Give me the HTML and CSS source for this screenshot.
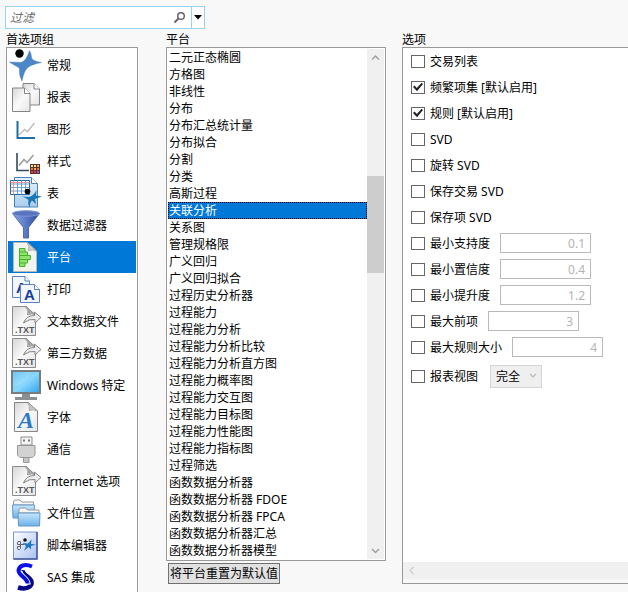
FILE: index.html
```html
<!DOCTYPE html>
<html lang="zh-CN">
<head>
    <meta charset="UTF-8">
    <meta name="viewport" content="width=device-width, initial-scale=1.0">
    <title>首选项</title>
    <link rel="stylesheet" href="styles.css">
</head>
<body>
    <!-- Shared gradients and symbols -->
    <svg class="defs" width="0" height="0" aria-hidden="true">
        <defs>
            <linearGradient id="paper" x1="0" y1="0" x2="1" y2="1">
                <stop offset="0" stop-color="#d6d6d6"/>
                <stop offset="0.5" stop-color="#fafafa"/>
                <stop offset="1" stop-color="#e4e4e4"/>
            </linearGradient>
            <linearGradient id="bluePaper" x1="0" y1="0" x2="0" y2="1">
                <stop offset="0" stop-color="#e6f1fb"/>
                <stop offset="1" stop-color="#a9cdee"/>
            </linearGradient>
            <linearGradient id="funnel" x1="0" y1="0" x2="1" y2="0">
                <stop offset="0" stop-color="#8aa4e0"/>
                <stop offset="0.4" stop-color="#6384cf"/>
                <stop offset="1" stop-color="#2c489c"/>
            </linearGradient>
            <linearGradient id="screen" x1="0" y1="0" x2="1" y2="1">
                <stop offset="0" stop-color="#4fb8f5"/>
                <stop offset="0.5" stop-color="#8ad8fc"/>
                <stop offset="1" stop-color="#35a7ee"/>
            </linearGradient>
            <linearGradient id="folder" x1="0" y1="0" x2="0" y2="1">
                <stop offset="0" stop-color="#c9e6fb"/>
                <stop offset="1" stop-color="#6db1e8"/>
            </linearGradient>
            <linearGradient id="script" x1="0" y1="0" x2="1" y2="1">
                <stop offset="0" stop-color="#ffffff"/>
                <stop offset="1" stop-color="#a8c0f0"/>
            </linearGradient>
            <symbol id="txt-file" viewBox="0 0 34 32">
                <path d="M4.5 1.5H18L27.5 10V30.5H4.5Z" fill="url(#paper)" stroke="#8c8c8c"/>
                <path d="M17 1.5Q21 5 19.5 10Q24 8 27.5 10L18 1.5Z" fill="#a8a8a8" stroke="#8c8c8c" stroke-width=".6"/>
                <path d="M15.5 18Q18 10.5 26.5 10.5V7L33 12.5L27 18V14.5Q21 13.5 15.5 18Z" fill="#ececec" stroke="#777" stroke-width=".9"/>
                <text x="7" y="28" class="txt-mark">.TXT</text>
            </symbol>
        </defs>
    </svg>

    <div class="search">
        <input type="text" class="search-input" placeholder="过滤" aria-label="过滤">
        <svg class="search-icon" width="14" height="14" viewBox="0 0 14 14" aria-hidden="true">
            <circle cx="8" cy="5" r="3.3" fill="none" stroke="#666" stroke-width="1.5"/>
            <path d="M5.5 7.5L1.5 11.5" stroke="#666" stroke-width="2"/>
        </svg>
        <button type="button" class="search-menu" aria-label="过滤选项">
            <svg width="8" height="5" viewBox="0 0 8 5"><path d="M0 0H8L4 4.5Z" fill="#000"/></svg>
        </button>
    </div>

    <main class="columns">
        <!-- Preference groups -->
        <section class="column groups">
            <h2>首选项组</h2>
            <ul class="group-list">
                <li><button type="button" class="group">
                    <svg class="icon" viewBox="0 0 32 32">
                        <path d="M1.500 13L13 13.500Q18.500 12 21.500 1.500Q23.500 5 23.500 8.500Q24 12 33.500 13.500Q25 15 20.500 18Q16 21 14 32Q11 26 11.500 22Q12.500 18.500 8 17Q5 15.500 1.500 13Z" fill="#4a87ca" stroke="#3a6ca8" stroke-width=".4"/>
                        <circle cx="11.5" cy="4.5" r="4.2" fill="#000"/>
                    </svg>常规</button></li>
                <li><button type="button" class="group">
                    <svg class="icon" viewBox="0 0 32 32">
                        <path d="M15 2.5H26L31.5 8V24H15Z" fill="url(#paper)" stroke="#858585"/>
                        <path d="M26 2.5V8H31.5" fill="#fff" stroke="#858585"/>
                        <path d="M4.5 7H16.5L22 12.5V30.5H4.5Z" fill="url(#paper)" stroke="#858585"/>
                        <path d="M16.5 7V12.5H22" fill="#fff" stroke="#858585"/>
                    </svg>报表</button></li>
                <li><button type="button" class="group">
                    <svg class="icon" viewBox="0 0 32 32">
                        <path d="M11 22L16.5 16.5L19.5 18.5L26.5 10" fill="none" stroke="#bdbdbd" stroke-width="1.4"/>
                        <path d="M9.500 8V25H27" fill="none" stroke="#1b6fa8" stroke-width="2"/>
                    </svg>图形</button></li>
                <li><button type="button" class="group">
                    <svg class="icon" viewBox="0 0 32 32">
                        <path d="M11 20.5L16 14.5L19 17.5L25.5 10" fill="none" stroke="#a0a0a0" stroke-width="1.6"/>
                        <path d="M9 8V25.5H21" fill="none" stroke="#34495a" stroke-width="1.6"/>
                        <path d="M22 19H32V29H22Z" fill="#5d302c"/>
                        <path d="M23 20h2v2h-2zM26 20h2v2h-2z" fill="#f6e6a0"/>
                        <path d="M29 20h2v2h-2zM26 23h2v2h-2z" fill="#f0b050"/>
                        <path d="M23 23h2v2h-2zM29 23h2v2h-2z" fill="#e87848"/>
                        <path d="M23 26h2v2h-2zM26 26h2v2h-2z" fill="#cf3f48"/>
                        <path d="M29 26h2v2h-2z" fill="#6d6fd0"/>
                    </svg>样式</button></li>
                <li><button type="button" class="group">
                    <svg class="icon" viewBox="0 0 32 32">
                        <path d="M6.5 .5H23.5L29.5 6.5V30H6.5Z" fill="url(#bluePaper)" stroke="#4b83b8"/>
                        <path d="M23.5 .5V6.5H29.5" fill="#fff" stroke="#4b83b8"/>
                        <path d="M2.5 3.5H21.5V17.5H2.5Z" fill="#fff" stroke="#2864a8"/>
                        <path d="M2.5 7H21.5M2.5 10.5H21.5M2.5 14H21.5M9.5 3.5V17.5M13.5 3.5V17.5M17.5 3.5V17.5" stroke="#4d8bc8" stroke-width=".8"/>
                        <path d="M5.5 3.5V17.5M2.5 5.5H21.5" stroke="#e88080" stroke-width=".8"/>
                        <path d="M14 19.500L21 20Q26 18.500 28.500 13L28 18.500L34 19.500L27 22L28 27L24 23.500Q22 25 21.500 31Q19.500 27 20.500 23Q18 20.500 14 19.500Z" fill="#1878b4"/>
                        <circle cx="19.5" cy="14.5" r="2.8" fill="#000"/>
                    </svg>表</button></li>
                <li><button type="button" class="group">
                    <svg class="icon" viewBox="0 0 32 32">
                        <path d="M4.5 4.5L15.5 18.5V29H20.5V18.5L31.5 4.5Z" fill="url(#funnel)" stroke="#3a54a0" stroke-width=".8"/>
                        <ellipse cx="18" cy="4.5" rx="13.5" ry="2.8" fill="#5874bc" stroke="#7c94d4"/>
                    </svg>数据过滤器</button></li>
                <li><button type="button" class="group selected" aria-current="true">
                    <svg class="icon" viewBox="0 0 32 32">
                        <path d="M5.5 1.5H19.5L28.5 10V30.5H5.5Z" fill="#f4f4ee" stroke="#b8b8b0"/>
                        <path d="M19 1.5Q22 5 20.5 9.5Q25 8 28.5 10L19.5 1.5Z" fill="#d0d0cc" stroke="#888" stroke-width=".6"/>
                        <path d="M11.5 7.5H17V11H19.5V14.5H22.5V18.5H19.5V22H17V25.5H11.5Z" fill="#8ce66c" stroke="#45b02c"/>
                        <path d="M11.5 11H17M11.5 14.5H19.5M11.5 18.5H19.5M11.5 22H17" stroke="#45b02c"/>
                    </svg>平台</button></li>
                <li><button type="button" class="group">
                    <svg class="icon" viewBox="0 0 32 32">
                        <path d="M4.5 3.5H17L21.5 8V24.5H4.5Z" fill="#f2f6fd" stroke="#5b80c8"/>
                        <path d="M17 3.5V8H21.5" fill="#fff" stroke="#5b80c8"/>
                        <text x="8" y="20" class="letter">A</text>
                        <path d="M12.5 11.5H26.5L31.5 16.5V29.5H12.5Z" fill="#f2f6fd" stroke="#5b80c8"/>
                        <path d="M26.5 11.5V16.5H31.5" fill="#fff" stroke="#5b80c8"/>
                        <text x="16" y="27" class="letter">A</text>
                    </svg>打印</button></li>
                <li><button type="button" class="group">
                    <svg class="icon" viewBox="0 0 32 32"><use href="#txt-file" width="34" height="32"/></svg>文本数据文件</button></li>
                <li><button type="button" class="group">
                    <svg class="icon" viewBox="0 0 32 32"><use href="#txt-file" width="34" height="32"/></svg>第三方数据</button></li>
                <li><button type="button" class="group">
                    <svg class="icon" viewBox="0 0 32 32">
                        <path d="M14 25H22V28H29V31H7V28H14Z" fill="#8b9093"/>
                        <rect x="3" y="1" width="30" height="24" fill="#777c80"/>
                        <rect x="5" y="3" width="26" height="20" fill="url(#screen)"/>
                        <path d="M5 3H24Q19 15 5 18Z" fill="#fff" opacity=".18"/>
                    </svg>Windows 特定</button></li>
                <li><button type="button" class="group">
                    <svg class="icon" viewBox="0 0 32 32">
                        <path d="M6.5 1.5H20L29.5 10V30.5H6.5Z" fill="url(#paper)" stroke="#858585"/>
                        <path d="M19.5 1.5Q22.5 5 21 9.5Q25.5 8 29.5 10L20 1.5Z" fill="#c8c8c8" stroke="#858585" stroke-width=".6"/>
                        <text x="10" y="27" class="font-letter">A</text>
                    </svg>字体</button></li>
                <li><button type="button" class="group">
                    <svg class="icon" viewBox="0 0 32 32">
                        <path d="M13 4H24V12H13Z" fill="#f4f4f4" stroke="#8a8a8a"/>
                        <path d="M15 6.5h2v2h-2zM20 6.5h2v2h-2z" fill="#777"/>
                        <path d="M15.5 23H21V29.5H15.5Z" fill="#c4c4c4" stroke="#999"/>
                        <path d="M9.5 12.5H27V22L24.5 24.5H12L9.5 22Z" fill="#d2d2d2" stroke="#989898"/>
                    </svg>通信</button></li>
                <li><button type="button" class="group">
                    <svg class="icon" viewBox="0 0 32 32"><use href="#txt-file" width="34" height="32"/></svg>Internet 选项</button></li>
                <li><button type="button" class="group">
                    <svg class="icon" viewBox="0 0 32 32">
                        <path d="M5.5 8V4L7 3H12L14 5H25.5V8Z" fill="#f6f6f6" stroke="#999"/>
                        <path d="M4.5 8H26.5L26 21H5Z" fill="url(#folder)" stroke="#6098c8"/>
                        <path d="M11 16V12L12.5 11H17.5L19.5 13H31V16Z" fill="#f6f6f6" stroke="#999"/>
                        <path d="M10 16H32L31.5 29H10.5Z" fill="url(#folder)" stroke="#6098c8"/>
                    </svg>文件位置</button></li>
                <li><button type="button" class="group">
                    <svg class="icon" viewBox="0 0 32 32">
                        <path d="M5.5 3H29V30H5.5Z" fill="url(#script)" stroke="#7894d0"/>
                        <path d="M29 3V30H5.5" fill="none" stroke="#46589c" stroke-width="1.5"/>
                        <path d="M10 12.5H12.500V19.500Q12 21 10 20.500Q9 19 9.500 17.500H12.500M10 12.500Q9 14 9.500 15.500H16" fill="none" stroke="#666"/>
                        <path d="M14.500 14L20 14.500L23.500 10.500L23 15L28 15.500L23 17L23 20.500L20.500 18L16 22L18 17Z" fill="#1878c4"/>
                        <circle cx="17" cy="11" r="1.8" fill="#111"/>
                    </svg>脚本编辑器</button></li>
                <li><button type="button" class="group">
                    <svg class="icon" viewBox="0 0 32 32" fill="none">
                        <path d="M10 26.500C18 29 24.500 26 23.500 20.500C22.500 16 14 14 14.500 9" stroke="#070a88" stroke-width="4.500"/>
                        <path d="M21 23.500C22 17 12.500 15 13 9.500" stroke="#fff" stroke-width="3"/>
                        <path d="M24 5.500C17 2.500 11 4.500 10.500 9.500C10.500 15 19.500 16.500 19.500 22.500" stroke="#0a10e8" stroke-width="4"/>
                    </svg>SAS 集成</button></li>
            </ul>
        </section>

        <!-- Platforms -->
        <section class="column platforms">
            <h2>平台</h2>
            <div class="platform-box">
                <ul class="platform-list">
                    <li><button type="button" class="platform">二元正态椭圆</button></li>
                    <li><button type="button" class="platform">方格图</button></li>
                    <li><button type="button" class="platform">非线性</button></li>
                    <li><button type="button" class="platform">分布</button></li>
                    <li><button type="button" class="platform">分布汇总统计量</button></li>
                    <li><button type="button" class="platform">分布拟合</button></li>
                    <li><button type="button" class="platform">分割</button></li>
                    <li><button type="button" class="platform">分类</button></li>
                    <li><button type="button" class="platform">高斯过程</button></li>
                    <li><button type="button" class="platform selected" aria-current="true">关联分析</button></li>
                    <li><button type="button" class="platform">关系图</button></li>
                    <li><button type="button" class="platform">管理规格限</button></li>
                    <li><button type="button" class="platform">广义回归</button></li>
                    <li><button type="button" class="platform">广义回归拟合</button></li>
                    <li><button type="button" class="platform">过程历史分析器</button></li>
                    <li><button type="button" class="platform">过程能力</button></li>
                    <li><button type="button" class="platform">过程能力分析</button></li>
                    <li><button type="button" class="platform">过程能力分析比较</button></li>
                    <li><button type="button" class="platform">过程能力分析直方图</button></li>
                    <li><button type="button" class="platform">过程能力概率图</button></li>
                    <li><button type="button" class="platform">过程能力交互图</button></li>
                    <li><button type="button" class="platform">过程能力目标图</button></li>
                    <li><button type="button" class="platform">过程能力性能图</button></li>
                    <li><button type="button" class="platform">过程能力指标图</button></li>
                    <li><button type="button" class="platform">过程筛选</button></li>
                    <li><button type="button" class="platform">函数数据分析器</button></li>
                    <li><button type="button" class="platform">函数数据分析器 FDOE</button></li>
                    <li><button type="button" class="platform">函数数据分析器 FPCA</button></li>
                    <li><button type="button" class="platform">函数数据分析器汇总</button></li>
                    <li><button type="button" class="platform">函数数据分析器模型</button></li>
                </ul>
                <div class="scrollbar" aria-hidden="true">
                    <svg class="scroll-arrow" viewBox="0 0 17 17"><path d="M5 10.5L8.5 7L12 10.5"/></svg>
                    <div class="scroll-track"><div class="scroll-thumb"></div></div>
                    <svg class="scroll-arrow" viewBox="0 0 17 17"><path d="M5 7L8.5 10.5L12 7"/></svg>
                </div>
            </div>
            <button type="button" class="reset">将平台重置为默认值</button>
        </section>

        <!-- Options of the selected platform -->
        <section class="column options">
            <h2>选项</h2>
            <div class="option-box">
                <form class="option-list">
                    <div class="option"><input type="checkbox" id="opt-list"><label for="opt-list">交易列表</label></div>
                    <div class="option"><input type="checkbox" id="opt-itemsets" checked><label for="opt-itemsets">频繁项集 [默认启用]</label></div>
                    <div class="option"><input type="checkbox" id="opt-rules" checked><label for="opt-rules">规则 [默认启用]</label></div>
                    <div class="option"><input type="checkbox" id="opt-svd"><label for="opt-svd">SVD</label></div>
                    <div class="option"><input type="checkbox" id="opt-rotated"><label for="opt-rotated">旋转 SVD</label></div>
                    <div class="option"><input type="checkbox" id="opt-save-trans"><label for="opt-save-trans">保存交易 SVD</label></div>
                    <div class="option"><input type="checkbox" id="opt-save-item"><label for="opt-save-item">保存项 SVD</label></div>
                    <div class="option"><input type="checkbox" id="opt-support"><label for="opt-support">最小支持度</label>
                        <input type="text" class="number" value="0.1" aria-label="最小支持度" disabled></div>
                    <div class="option"><input type="checkbox" id="opt-confidence"><label for="opt-confidence">最小置信度</label>
                        <input type="text" class="number" value="0.4" aria-label="最小置信度" disabled></div>
                    <div class="option"><input type="checkbox" id="opt-lift"><label for="opt-lift">最小提升度</label>
                        <input type="text" class="number" value="1.2" aria-label="最小提升度" disabled></div>
                    <div class="option"><input type="checkbox" id="opt-antecedents"><label for="opt-antecedents">最大前项</label>
                        <input type="text" class="number" value="3" aria-label="最大前项" disabled></div>
                    <div class="option"><input type="checkbox" id="opt-size"><label for="opt-size">最大规则大小</label>
                        <input type="text" class="number" value="4" aria-label="最大规则大小" disabled></div>
                    <div class="option option-view"><input type="checkbox" id="opt-view"><label for="opt-view">报表视图</label>
                        <div class="select-wrap">
                            <select aria-label="报表视图">
                                <option>完全</option>
                            </select>
                            <svg class="select-arrow" viewBox="0 0 8 6" aria-hidden="true"><path d="M1 1L4 4L7 1"/></svg>
                        </div>
                    </div>
                </form>
                <div class="scrollbar-bottom" aria-hidden="true">
                    <svg class="scroll-arrow" viewBox="0 0 17 17"><path d="M10.5 5L7 8.5L10.5 12"/></svg>
                </div>
            </div>
        </section>
    </main>
</body>
</html>
```

FILE: styles.css
```css
* {
    margin: 0;
    padding: 0;
    box-sizing: border-box;
}

body {
    display: flex;
    flex-direction: column;
    height: 100vh;
    padding: 6px 0 8px 6px;
    overflow: hidden;
    background: #f8f8f8;
    color: #000;
    font: 12px/17px "Noto Sans", "Noto Sans CJK SC", sans-serif;
}

button, input, select {
    font: inherit;
    color: inherit;
}

ul {
    list-style: none;
}

.defs {
    position: absolute;
}

/* Search box */
.search {
    display: flex;
    align-items: center;
    align-self: flex-start;
    width: 200px;
    height: 23px;
    margin-left: -1px;
    background: white;
    border: 1px solid #99d1f1;
}

.search-input {
    flex: 1;
    min-width: 0;
    height: 100%;
    padding: 0 4px;
    border: none;
    outline: none;
    background: none;
}

.search-input::placeholder {
    color: #6d6d6d;
    font-style: italic;
}

.search-icon {
    margin-right: 4px;
}

.search-menu {
    display: flex;
    justify-content: center;
    align-items: center;
    width: 13px;
    height: 100%;
    border: none;
    border-left: 1px solid #99d1f1;
    background: white;
}

/* Columns */
.columns {
    flex: 1;
    display: grid;
    grid-template-columns: 132px 220px 1fr;
    column-gap: 0;
    min-height: 0;
}

.column {
    display: flex;
    flex-direction: column;
    min-width: 0;
    min-height: 0;
}

.column h2 {
    height: 18px;
    line-height: 22px;
    font-size: 12px;
    font-weight: normal;
}

.groups {
    margin-bottom: -8px;
}

.platforms {
    margin: 0 -28px 0 28px;
}

.options {
    margin-left: 44px;
}

/* Group list */
.group-list {
    flex: 1;
    padding: 1px;
    background: white;
    border: 1px solid #999;
    border-bottom: none;
}

.group {
    display: flex;
    align-items: center;
    gap: 7px;
    width: 100%;
    height: 32px;
    border: none;
    background: none;
    text-align: left;
    white-space: nowrap;
}

.group.selected, .platform.selected {
    background: #0078d7;
    color: white;
}

.icon {
    flex: none;
    width: 32px;
    height: 32px;
    overflow: visible;
}

.txt-mark {
    font: bold 9px "Liberation Sans", sans-serif;
    fill: #555;
}

.letter {
    font: bold 15px "Liberation Sans", sans-serif;
    fill: #173f96;
}

.font-letter {
    font: italic bold 24px "Liberation Serif", serif;
    fill: #2a7cc8;
}

/* Platform list */
.platform-box {
    flex: 1;
    display: flex;
    min-height: 0;
    padding: 1px;
    background: white;
    border: 1px solid #999;
}

.platform-list {
    flex: 1;
    overflow: hidden;
}

.platform {
    display: block;
    width: 100%;
    height: 17px;
    padding: 0 1px;
    border: none;
    background: none;
    line-height: 17px;
    text-align: left;
}

.platform.selected {
    padding: 0;
    border: 1px dotted #000;
    line-height: 15px;
}

.scrollbar {
    display: flex;
    flex-direction: column;
    width: 17px;
    background: #f0f0f0;
}

.scroll-arrow {
    flex: none;
    width: 17px;
    height: 17px;
    fill: none;
    stroke: #a0a0a0;
    stroke-width: 1.5;
}

.scroll-track {
    flex: 1;
    padding-top: 110px;
}

.scroll-thumb {
    height: 97px;
    background: #cdcdcd;
}

.reset {
    align-self: flex-start;
    height: 21px;
    margin: 2px 0 0 2px;
    padding: 0 1px;
    border: 1px solid #707070;
    background: #e1e1e1;
    line-height: 19px;
}

/* Options */
.option-box {
    flex: 1;
    display: flex;
    flex-direction: column;
    min-height: 0;
    padding-bottom: 4px;
    background: #f8f8f8;
    border: 1px solid #999;
    border-right: none;
}

.option-list {
    flex: 1;
    min-height: 0;
    overflow: hidden;
    background: white;
}

.option {
    display: flex;
    align-items: center;
    height: 26px;
    padding-left: 8px;
    white-space: nowrap;
}

.option-view {
    height: 32px;
}

.option input[type="checkbox"] {
    appearance: none;
    display: grid;
    place-items: center;
    width: 14px;
    height: 13px;
    margin-right: 5px;
    border: 1px solid #666;
    background: white;
}

.option input[type="checkbox"]:checked::after {
    content: "";
    width: 10px;
    height: 9px;
    background: #222;
    clip-path: polygon(0 50%, 16% 34%, 38% 60%, 86% 2%, 100% 16%, 40% 98%);
}

.number {
    width: 91px;
    height: 20px;
    margin-left: 10px;
    padding: 0 5px;
    border: 1px solid #bababa;
    background: white;
    color: #b4b4b4;
    text-align: right;
}

.select-wrap {
    position: relative;
    margin-left: 12px;
}

.select-wrap select {
    appearance: none;
    display: block;
    width: 52px;
    height: 23px;
    padding: 0 5px;
    border: 1px solid #d4d4d4;
    border-radius: 0;
    background: #efefef;
}

.select-arrow {
    position: absolute;
    right: 5px;
    top: 8px;
    width: 8px;
    height: 6px;
    fill: none;
    stroke: #b8b8b8;
    stroke-width: 1.2;
    pointer-events: none;
}

.scrollbar-bottom {
    flex: none;
    height: 17px;
    background: #f0f0f0;
}

.scrollbar-bottom .scroll-arrow {
    display: block;
    stroke: #d0d0d0;
}
```
